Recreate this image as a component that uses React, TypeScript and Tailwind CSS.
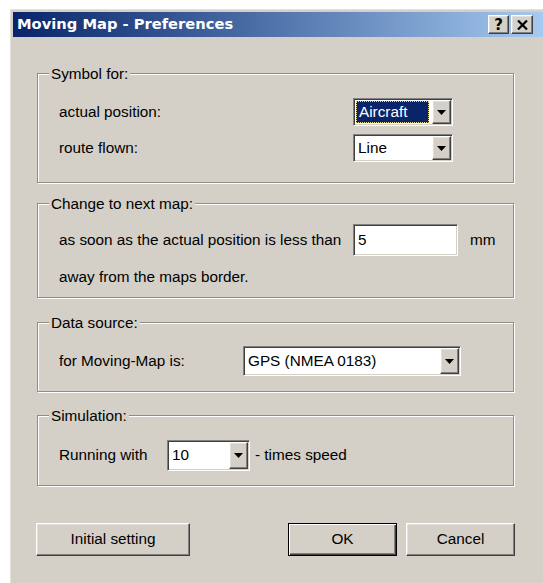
import React from "react";

// classic 3D borders
const raised =
  "bg-[#d4d0c8] border border-t-white border-l-white border-r-[#404040] border-b-[#404040] shadow-[inset_-1px_-1px_0_#808080,inset_1px_1px_0_#dfdfdf]";
const sunken =
  "bg-white border border-t-[#808080] border-l-[#808080] border-r-white border-b-white shadow-[inset_1px_1px_0_#404040,inset_-1px_-1px_0_#d4d0c8]";

function DropButton() {
  return (
    <div className={`m-[1px] flex w-[19px] shrink-0 items-center justify-center ${raised}`}>
      <svg width="9" height="5" viewBox="0 0 9 5">
        <path d="M0 0h9L4.5 5z" fill="#000" />
      </svg>
    </div>
  );
}

function Combo({
  value,
  className,
  selected = false,
}: {
  value: string;
  className: string;
  selected?: boolean;
}) {
  return (
    <div className={`flex ${sunken} ${className}`}>
      {selected ? (
        <div className="flex flex-1 p-[2px]">
          <span className="flex flex-1 items-center border border-dotted border-[#e3d98f] bg-[#0a246a] pl-[2px] text-white">
            {value}
          </span>
        </div>
      ) : (
        <span className="flex flex-1 items-center pl-[4px]">{value}</span>
      )}
      <DropButton />
    </div>
  );
}

function Group({
  title,
  className,
  children,
}: {
  title: string;
  className: string;
  children: React.ReactNode;
}) {
  return (
    <div
      className={`relative w-[477px] border border-[#8f8d88] pl-[21px] shadow-[inset_1px_1px_0_#fff,1px_1px_0_#fff] ${className}`}
    >
      <span className="absolute -top-[9px] left-[11px] bg-[#d4d0c8] px-[2px] leading-[17px]">
        {title}
      </span>
      {children}
    </div>
  );
}

function Button({
  label,
  className,
  isDefault = false,
}: {
  label: string;
  className: string;
  isDefault?: boolean;
}) {
  const look = isDefault
    ? "bg-[#d4d0c8] border border-black shadow-[inset_1px_1px_0_#fff,inset_-1px_-1px_0_#404040,inset_-2px_-2px_0_#808080]"
    : raised;
  return (
    <button className={`flex h-[33px] items-center justify-center ${look} ${className}`}>
      {label}
    </button>
  );
}

export default function App() {
  return (
    <div className="h-screen overflow-hidden bg-white pl-[10px] pt-[9px] font-['Liberation_Sans',Arial,sans-serif] text-[15.3px] text-black">
      <div className="h-full border-l border-t border-[#e4e1da] bg-[#d4d0c8] pl-[2px] pt-[2px]">
        {/* caption */}
        <div className="flex h-[25px] items-center bg-linear-to-r from-[#0a246a] to-[#a6caf0] pl-[4px] pr-[10px]">
          <span className="font-['DejaVu_Sans',sans-serif] text-[14.7px] font-bold text-white">
            Moving Map - Preferences
          </span>
          <div className="ml-auto flex gap-[2px]">
            <div className={`flex h-[19px] w-[21px] items-center justify-center pt-[1px] font-['DejaVu_Sans',sans-serif] text-[15px] font-bold leading-none text-black ${raised}`}>
              ?
            </div>
            <div className={`flex h-[19px] w-[22px] items-center justify-center ${raised}`}>
              <svg width="11" height="10" viewBox="0 0 11 10">
                <path d="M1 0.5l9 9M10 0.5l-9 9" stroke="#000" strokeWidth="2.2" />
              </svg>
            </div>
          </div>
        </div>

        <div className="pl-[24px]">
          <Group title="Symbol for:" className="mt-[36px] h-[110px] pt-[24px]">
            <div className="flex items-center">
              <span className="w-[294px]">actual position:</span>
              <Combo value="Aircraft" selected className="h-[28px] w-[100px]" />
            </div>
            <div className="mt-[8px] flex items-center">
              <span className="w-[294px]">route flown:</span>
              <Combo value="Line" className="h-[28px] w-[100px]" />
            </div>
          </Group>

          <Group title="Change to next map:" className="mt-[20px] h-[95px] pt-[20px]">
            <div className="flex items-center">
              <span className="w-[294px]">as soon as the actual position is less than</span>
              <div className={`flex h-[32px] w-[105px] items-center pl-[4px] ${sunken}`}>5</div>
              <span className="ml-[12px]">mm</span>
            </div>
            <div className="mt-[12px] leading-[17px]">away from the maps border.</div>
          </Group>

          <Group title="Data source:" className="mt-[24px] h-[70px] pt-[23px]">
            <div className="flex items-center">
              <span className="w-[184px]">for Moving-Map is:</span>
              <Combo value="GPS (NMEA 0183)" className="h-[30px] w-[218px]" />
            </div>
          </Group>

          <Group title="Simulation:" className="mt-[23px] h-[71px] pt-[24px]">
            <div className="flex items-center">
              <span className="w-[108px]">Running with</span>
              <Combo value="10" className="h-[31px] w-[83px]" />
              <span className="ml-[5px]">- times speed</span>
            </div>
          </Group>

          <div className="-ml-px mt-[37px] flex">
            <Button label="Initial setting" className="w-[154px]" />
            <Button label="OK" isDefault className="ml-[98px] w-[109px]" />
            <Button label="Cancel" className="ml-[9px] w-[109px]" />
          </div>
        </div>
      </div>
    </div>
  );
}
